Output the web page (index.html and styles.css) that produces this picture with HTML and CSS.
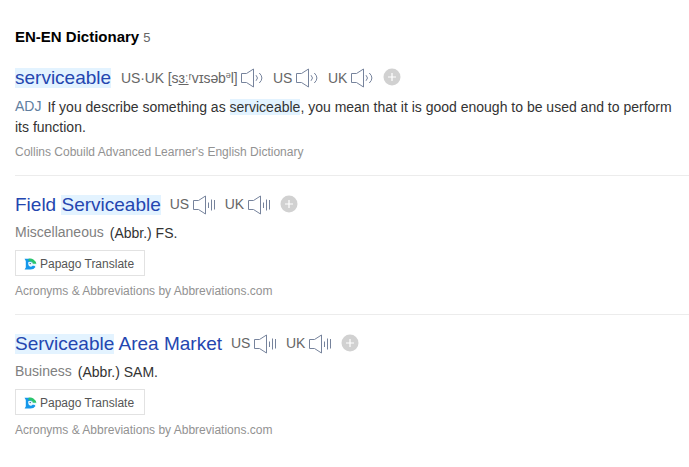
FILE: index.html
```
<!DOCTYPE html>
<html lang="en">
<head>
<meta charset="utf-8">
<title>EN-EN Dictionary</title>
<link rel="stylesheet" href="styles.css">
</head>
<body>
<svg class="defs" width="0" height="0">
  <defs>
    <symbol id="speaker" viewBox="0 0 23 20"><path d="M.5 5.5H5.5L12.5 1V19L5.5 14.5H.5Z M15 7.2Q18 10 15 12.8 M18.3 5Q23.5 10 18.3 15"/></symbol>
    <symbol id="tts" viewBox="0 0 23 20"><path d="M.5 5.5H5.5L12.5 1V19L5.5 14.5H.5Z M15.5 7.5V13 M18.5 4.5V15.5 M21.5 5V14.5"/></symbol>
    <symbol id="plus" viewBox="0 0 18 18"><circle cx="9" cy="9" r="8.5" fill="#d1d1d1"/><path d="M9 5V13M5 9H13" stroke="#fff" stroke-width="1.2"/></symbol>
    <symbol id="papago" viewBox="0 0 13 12"><path d="M.5 .8H6L9 6L11.5 9Q9.8 11.5 6.5 11.5H.6L1.8 9.5V3Z" fill="#1597eb"/><path d="M4.5 .8Q7 -.2 9.4 1.4Q12.3 3.4 12.3 6H9Q8.6 3.3 4.5 2.8Z" fill="#2ac56c"/><path d="M4.2 4.2Q7.5 3 8.8 5.8H12.6V7.8H8.5Q7.5 9 6 8.5Q4 8 4.2 4.2Z" fill="#eafaff"/><circle cx="6.2" cy="5.6" r=".7" fill="#174a8b"/></symbol>
  </defs>
</svg>
<main>
  <header class="heading"><h1>EN-EN Dictionary</h1><span class="count">5</span></header>
  <section class="entry">
    <div class="row"><h2><mark>serviceable</mark></h2>
      <span class="pron phonetic">US·UK [s<u>ɜː</u>ʳvɪsəb<sup>ə</sup>l]</span><svg class="sound"><use href="#speaker"/></svg>
      <span class="pron">US</span><svg class="sound"><use href="#speaker"/></svg>
      <span class="pron">UK</span><svg class="sound"><use href="#speaker"/></svg>
      <svg class="add"><use href="#plus"/></svg></div>
    <p class="meaning"><span class="pos">ADJ</span>If you describe something as <mark>serviceable</mark>, you mean that it is good enough to be used and to perform its function.</p>
    <p class="source">Collins Cobuild Advanced Learner's English Dictionary</p>
  </section>
  <section class="entry">
    <div class="row"><h2>Field <mark>Serviceable</mark></h2>
      <span class="pron">US</span><svg class="sound"><use href="#tts"/></svg>
      <span class="pron">UK</span><svg class="sound"><use href="#tts"/></svg>
      <svg class="add"><use href="#plus"/></svg></div>
    <p class="meaning"><span class="topic">Miscellaneous</span>(Abbr.) FS.</p>
    <a class="translate"><svg class="logo"><use href="#papago"/></svg>Papago Translate</a>
    <p class="source">Acronyms &amp; Abbreviations by Abbreviations.com</p>
  </section>
  <section class="entry">
    <div class="row"><h2><mark>Serviceable</mark> Area Market</h2>
      <span class="pron">US</span><svg class="sound"><use href="#tts"/></svg>
      <span class="pron">UK</span><svg class="sound"><use href="#tts"/></svg>
      <svg class="add"><use href="#plus"/></svg></div>
    <p class="meaning"><span class="topic">Business</span>(Abbr.) SAM.</p>
    <a class="translate"><svg class="logo"><use href="#papago"/></svg>Papago Translate</a>
    <p class="source">Acronyms &amp; Abbreviations by Abbreviations.com</p>
  </section>
</main>
</body>
</html>
```
FILE: styles.css
```
* { box-sizing: border-box; }
body { margin: 0; background: #fff; color: #333; font: 14px/20px "Liberation Sans", Arial, sans-serif; overflow: hidden; }
h1, h2, p { margin: 0; }
.defs { display: block; }
main { padding: 27px 0 0 15px; }
.heading { display: flex; align-items: center; height: 20px; gap: 4px; }
h1 { font-size: 15px; color: #000; }
.count { font-size: 13px; color: #666; padding-top: 2px; }
.entry { border-bottom: 1px solid #ececec; height: 139px; padding-top: 16px; }
.entry:first-of-type { height: 129px; padding-top: 18px; }
.entry:last-child { border: 0; }
.row { display: flex; align-items: center; height: 24px; color: #666; }
h2 { font-size: 19px; font-weight: 400; line-height: 24px; color: #2446b0; white-space: nowrap; padding-top: 1px; }
mark { background: #e3f3ff; color: inherit; }
h2 mark { display: inline-block; height: 20px; line-height: 20px; }
.pron { margin-left: 9.5px; white-space: nowrap; }
.row h2 + .pron { margin-left: 9px; }
.row .phonetic { letter-spacing: -.12px; }
.entry:first-of-type .pron { padding-top: 2px; }
.row h2 + .phonetic { margin-left: 10px; }
sup { font-size: 9px; line-height: 0; vertical-align: 5px; }
u { text-underline-offset: 1px; }
.sound { width: 23px; height: 20px; margin: 1px -1px 0 4px; fill: none; stroke: #76839c; stroke-width: 1; }
.add { width: 18px; height: 18px; margin-left: 10px; }
.meaning { padding-top: 7px; width: 665px; }
.entry:first-of-type .meaning { padding-top: 8px; }
.pos { color: #607e9f; margin-right: 6px; }
.topic { color: #808080; margin-right: 6px; }
.source { font-size: 12px; line-height: 18px; color: #929292; padding-top: 6px; }
.translate { display: flex; align-items: center; width: 130px; height: 26px; margin-top: 7px; padding: 2px 8px 0; border: 1px solid #e2e2e2; font-size: 12px; color: #555; white-space: nowrap; }
.logo { width: 13px; height: 12px; margin-right: 3px; }
.pos, .topic { display: inline-block; line-height: 18px; vertical-align: 1px; }
```
